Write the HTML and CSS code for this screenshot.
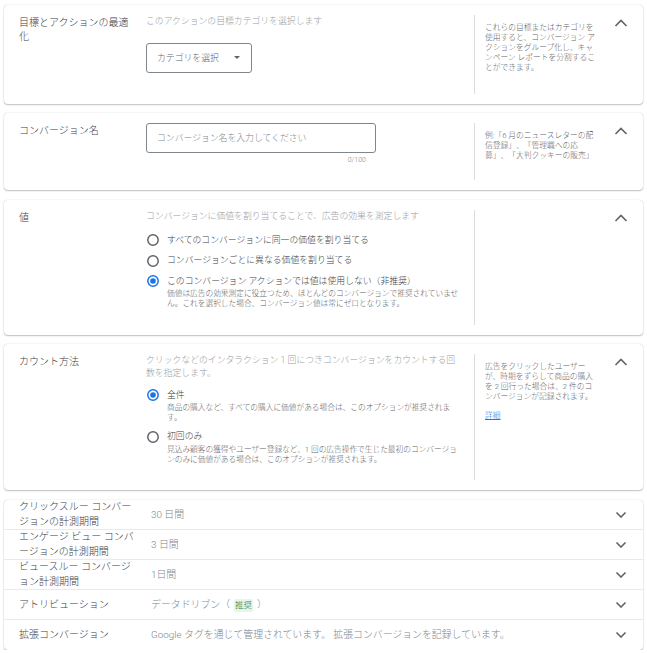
FILE: index.html
```html
<!DOCTYPE html>
<html lang="ja">
<head>
<meta charset="utf-8">
<title>コンバージョン アクションの設定</title>
<link rel="stylesheet" href="styles.css">
</head>
<body>
<div class="page">

  <section class="card">
    <div class="label">目標とアクションの最適化</div>
    <div class="main">
      <p class="desc">このアクションの目標カテゴリを選択します</p>
      <div class="select"><span>カテゴリを選択</span><span class="caret"></span></div>
    </div>
    <aside class="help"><p>これらの目標またはカテゴリを使用すると、コンバージョン アクションをグループ化し、キャンペーン レポートを分割することができます。</p></aside>
    <div class="toggle"><svg viewBox="0 0 14 8" width="14" height="8"><polyline points="1.5,7 7,1.5 12.5,7"/></svg></div>
  </section>

  <section class="card">
    <div class="label">コンバージョン名</div>
    <div class="main main-name">
      <input class="field" type="text" placeholder="コンバージョン名を入力してください">
      <div class="counter">0/100</div>
    </div>
    <aside class="help"><p>例:「6 月のニュースレターの配信登録」、「管理職への応募」、「大判クッキーの販売」</p></aside>
    <div class="toggle"><svg viewBox="0 0 14 8" width="14" height="8"><polyline points="1.5,7 7,1.5 12.5,7"/></svg></div>
  </section>

  <section class="card">
    <div class="label">値</div>
    <div class="main main-radios">
      <p class="desc">コンバージョンに価値を割り当てることで、広告の効果を測定します</p>
      <div class="options">
        <div class="option">
          <svg class="radio" viewBox="0 0 14 14" width="14" height="14"><circle cx="7" cy="7" r="5.2" class="ring"/></svg>
          <div class="opt-text"><div class="opt-label">すべてのコンバージョンに同一の価値を割り当てる</div></div>
        </div>
        <div class="option">
          <svg class="radio" viewBox="0 0 14 14" width="14" height="14"><circle cx="7" cy="7" r="5.2" class="ring"/></svg>
          <div class="opt-text"><div class="opt-label">コンバージョンごとに異なる価値を割り当てる</div></div>
        </div>
        <div class="option">
          <svg class="radio on" viewBox="0 0 14 14" width="14" height="14"><circle cx="7" cy="7" r="5.2" class="ring"/><circle cx="7" cy="7" r="2.8" class="dot"/></svg>
          <div class="opt-text">
            <div class="opt-label">このコンバージョン アクションでは値は使用しない（非推奨）</div>
            <div class="opt-sub">価値は広告の効果測定に役立つため、ほとんどのコンバージョンで推奨されていません。これを選択した場合、コンバージョン値は常にゼロとなります。</div>
          </div>
        </div>
      </div>
    </div>
    <aside class="help"></aside>
    <div class="toggle"><svg viewBox="0 0 14 8" width="14" height="8"><polyline points="1.5,7 7,1.5 12.5,7"/></svg></div>
  </section>

  <section class="card card-count">
    <div class="label">カウント方法</div>
    <div class="main main-radios">
      <p class="desc">クリックなどのインタラクション 1 回につきコンバージョンをカウントする回数を指定します。</p>
      <div class="options">
        <div class="option">
          <svg class="radio on" viewBox="0 0 14 14" width="14" height="14"><circle cx="7" cy="7" r="5.2" class="ring"/><circle cx="7" cy="7" r="2.8" class="dot"/></svg>
          <div class="opt-text">
            <div class="opt-label">全件</div>
            <div class="opt-sub">商品の購入など、すべての購入に価値がある場合は、このオプションが推奨されます。</div>
          </div>
        </div>
        <div class="option">
          <svg class="radio" viewBox="0 0 14 14" width="14" height="14"><circle cx="7" cy="7" r="5.2" class="ring"/></svg>
          <div class="opt-text">
            <div class="opt-label">初回のみ</div>
            <div class="opt-sub">見込み顧客の獲得やユーザー登録など、1 回の広告操作で生じた最初のコンバージョンのみに価値がある場合は、このオプションが推奨されます。</div>
          </div>
        </div>
      </div>
    </div>
    <aside class="help">
      <p>広告をクリックしたユーザーが、時期をずらして商品の購入を 2 回行った場合は、2 件のコンバージョンが記録されます。</p>
      <p class="more"><a href="#">詳細</a></p>
    </aside>
    <div class="toggle"><svg viewBox="0 0 14 8" width="14" height="8"><polyline points="1.5,7 7,1.5 12.5,7"/></svg></div>
  </section>

  <section class="card list">
    <div class="row">
      <div class="row-label">クリックスルー コンバージョンの計測期間</div>
      <div class="row-value">30 日間</div>
      <div class="row-toggle"><svg viewBox="0 0 12 7" width="12" height="7"><polyline points="1.5,1.5 6,6 10.5,1.5"/></svg></div>
    </div>
    <div class="row">
      <div class="row-label">エンゲージ ビュー コンバージョンの計測期間</div>
      <div class="row-value">3 日間</div>
      <div class="row-toggle"><svg viewBox="0 0 12 7" width="12" height="7"><polyline points="1.5,1.5 6,6 10.5,1.5"/></svg></div>
    </div>
    <div class="row">
      <div class="row-label">ビュースルー コンバージョン計測期間</div>
      <div class="row-value">1日間</div>
      <div class="row-toggle"><svg viewBox="0 0 12 7" width="12" height="7"><polyline points="1.5,1.5 6,6 10.5,1.5"/></svg></div>
    </div>
    <div class="row">
      <div class="row-label">アトリビューション</div>
      <div class="row-value">データドリブン（<span class="badge">推奨</span>）</div>
      <div class="row-toggle"><svg viewBox="0 0 12 7" width="12" height="7"><polyline points="1.5,1.5 6,6 10.5,1.5"/></svg></div>
    </div>
    <div class="row">
      <div class="row-label">拡張コンバージョン</div>
      <div class="row-value">Google タグを通じて管理されています。 拡張コンバージョンを記録しています。</div>
      <div class="row-toggle"><svg viewBox="0 0 12 7" width="12" height="7"><polyline points="1.5,1.5 6,6 10.5,1.5"/></svg></div>
    </div>
  </section>

</div>
</body>
</html>
```

FILE: styles.css
```css
* { box-sizing: border-box; }

html, body {
  margin: 0;
  background: #ffffff;
}

body {
  font-family: Roboto, "Noto Sans CJK JP", sans-serif;
  font-weight: 300;
  color: #3c4043;
  line-break: normal;
  text-spacing-trim: space-all;
}

p { margin: 0; }

.page {
  padding: 5px 4px 0;
  display: flex;
  flex-direction: column;
  gap: 9.5px;
}

.card {
  display: flex;
  align-items: stretch;
  background: #ffffff;
  border-radius: 4px;
  box-shadow: 0 0 1px rgba(60, 64, 67, 0.35), 0 1px 1.5px rgba(60, 64, 67, 0.3);
  padding: 10px 0 10px 15px;
}

.label {
  width: 127px;
  flex: none;
  padding: 1px 10px 0 0;
  font-size: 10px;
  line-height: 14px;
  color: #3c4043;
}

.main {
  width: 316px;
  flex: none;
  padding-bottom: 12px;
}

.desc {
  font-size: 8.84px;
  line-height: 12.5px;
  color: #9aa0a6;
}

.select {
  margin: 15px 0 9px;
  width: 106px;
  height: 30px;
  display: flex;
  align-items: center;
  padding: 0 10px;
  border: 1px solid #80868b;
  border-radius: 3px;
  font-size: 8.84px;
  color: #5f6368;
}

.caret {
  margin-left: auto;
  margin-right: 1px;
  width: 0;
  height: 0;
  border-left: 3px solid transparent;
  border-right: 3px solid transparent;
  border-top: 3px solid #5f6368;
}

.main-name { padding-bottom: 15px; }

.field {
  display: block;
  width: 230px;
  height: 30px;
  margin: 0;
  padding: 0 10px;
  border: 1px solid #80868b;
  border-radius: 3px;
  font-family: Roboto, "Noto Sans CJK JP", sans-serif;
  font-weight: 300;
  font-size: 8.84px;
  color: #3c4043;
  background: #ffffff;
  outline: none;
}

.field::placeholder { color: #80868b; }

.counter {
  width: 230px;
  margin-top: 2px;
  padding-right: 10px;
  text-align: right;
  font-size: 7px;
  line-height: 10px;
  color: #80868b;
}

.options {
  margin-top: 8px;
  display: flex;
  flex-direction: column;
}

.card-count .options { margin-top: 6px; }

.option {
  display: flex;
  align-items: flex-start;
  padding: 3.5px 0;
}

.radio {
  flex: none;
  margin: -0.5px 7px 0 0;
}

.radio .ring {
  fill: none;
  stroke: #5f6368;
  stroke-width: 1.5;
}

.radio.on .ring { stroke: #1a73e8; }
.radio .dot { fill: #1a73e8; }

.opt-text { flex: 1; min-width: 0; }

.opt-label {
  font-size: 8.84px;
  line-height: 13px;
  color: #3c4043;
}

.opt-sub {
  margin-top: 1.5px;
  font-size: 7.7px;
  line-height: 10px;
  color: #5f6368;
}

.help {
  width: 135px;
  flex: none;
  margin-left: 12px;
  border-left: 1px solid #dadce0;
  padding: 8px 13px 0 10px;
  font-size: 7.75px;
  line-height: 10px;
  color: #5f6368;
}

.help .more { margin-top: 9px; }

.help a {
  color: #1a73e8;
  text-decoration: underline;
}

.toggle {
  flex: 1;
  display: flex;
  justify-content: flex-end;
  align-items: flex-start;
  padding: 4px 15px 0 0;
}

.toggle svg, .row-toggle svg {
  display: block;
  fill: none;
  stroke: #5f6368;
  stroke-width: 1.6;
}

.list {
  flex-direction: column;
  padding: 0;
}

.row {
  display: flex;
  align-items: center;
  height: 30px;
  padding-left: 15px;
  border-bottom: 1px solid #e8eaed;
}

.row:last-child { border-bottom: none; }

.row-label {
  width: 132px;
  flex: none;
  padding-right: 15px;
  font-size: 10px;
  line-height: 15px;
  color: #3c4043;
}

.row-value {
  flex: 1;
  font-size: 9.9px;
  line-height: 15px;
  color: #80868b;
}

.badge {
  display: inline-block;
  margin: 0 4px;
  padding: 0 1px;
  border-radius: 2px;
  background: #e6f4ea;
  color: #137333;
  font-size: 8.5px;
  line-height: 13px;
}

.row-toggle {
  flex: none;
  padding-right: 16px;
}
```
